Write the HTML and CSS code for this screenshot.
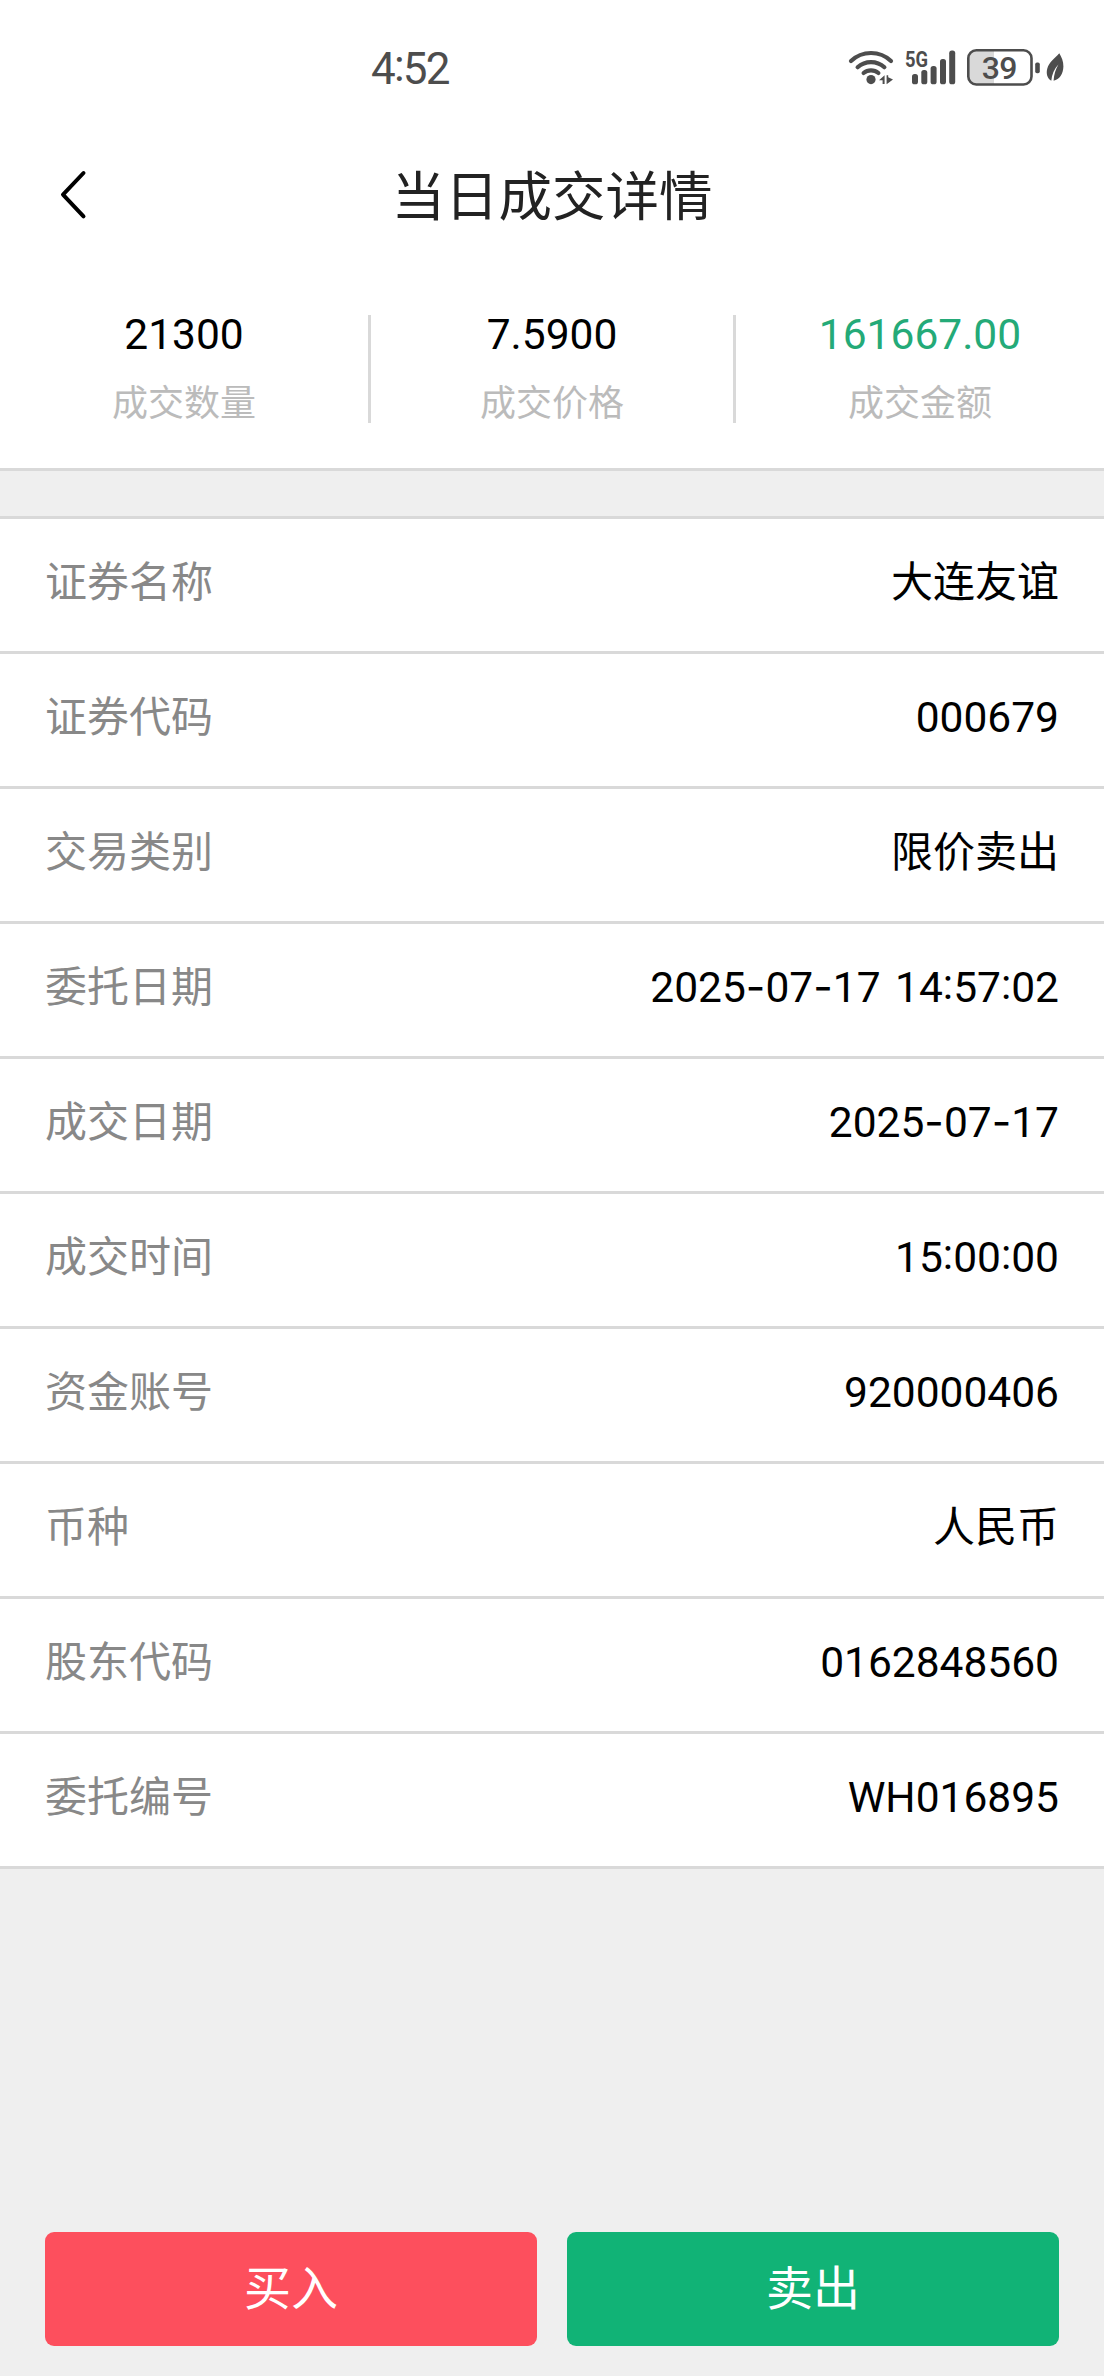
FILE: index.html
```html
<!DOCTYPE html>
<html lang="zh-CN">
<head>
<meta charset="utf-8">
<title>当日成交详情</title>
<link rel="stylesheet" href="styles.css">
</head>
<body>
<div class="screen">
  <div class="status-bar">
    <span class="clock">4<span class="colon">:</span>52</span>
    <svg class="status-icons" width="250" height="65" viewBox="0 0 250 65">
      <g class="line wifi">
        <path d="M21 26 A29 29 0 0 1 61 26"/>
        <path d="M27.6 32.2 A20 20 0 0 1 54.4 32.2"/>
        <path d="M33.6 38 A11.5 11.5 0 0 1 48.4 38"/>
      </g>
      <g class="solid">
        <circle cx="41" cy="44.6" r="4.6"/>
        <path d="M49 45.2 L54.6 40.3 V49 H52.6 V45.2 Z"/>
        <path d="M56.6 40.3 H58.2 V42.2 L63 44.6 L56.6 49.2 Z"/>
        <rect x="82" y="39" width="6" height="10.3" rx="2.6"/>
        <rect x="91.3" y="35" width="6" height="14.3" rx="2.6"/>
        <rect x="100.6" y="31" width="6" height="18.3" rx="2.6"/>
        <rect x="110" y="24" width="6" height="25.3" rx="2.6"/>
        <rect x="119.2" y="15.6" width="6" height="33.7" rx="2.6"/>
        <rect x="205.2" y="27.4" width="4.6" height="10.8" rx="1.8"/>
        <path d="M229.3 18.2 C231.5 22 233.5 26 233.4 31.5 C233.2 39 229.5 44.5 223.6 45.8 C224 39.5 225.6 34.5 228.4 29.6 C224.2 34 221.8 39.5 221.3 45.8 C217 43.5 216 38 217.3 33.5 C219 27 224.5 23.5 229.3 18.2 Z"/>
      </g>
      <text class="net" x="75" y="32.4" textLength="23" lengthAdjust="spacingAndGlyphs">5G</text>
      <path class="charge" d="M164 16 H147 Q139 16 139 24 V41 Q139 49 147 49 H164 Z"/>
      <rect class="line battery" x="138.3" y="15.3" width="63.2" height="34.2" rx="8"/>
      <text class="level" x="169.2" y="43.7">39</text>
    </svg>
  </div>

  <header class="nav">
    <svg class="back" width="28" height="52" viewBox="0 0 28 52"><path d="M23.5 4 L3 25.7 L23.5 47.4"/></svg>
    <h1 class="title">当日成交详情</h1>
  </header>

  <section class="summary">
    <div class="stat"><span class="figure">21300</span><span class="caption">成交数量</span></div>
    <div class="divider"></div>
    <div class="stat middle"><span class="figure">7.5900</span><span class="caption">成交价格</span></div>
    <div class="divider"></div>
    <div class="stat"><span class="figure amount">161667.00</span><span class="caption">成交金额</span></div>
  </section>

  <dl class="details">
    <div class="row"><dt>证券名称</dt><dd class="han">大连友谊</dd></div>
    <div class="row"><dt>证券代码</dt><dd>000679</dd></div>
    <div class="row"><dt>交易类别</dt><dd class="han">限价卖出</dd></div>
    <div class="row"><dt>委托日期</dt><dd>2025<span class="dash">-</span>07<span class="dash">-</span>17 14<span class="colon">:</span>57<span class="colon">:</span>02</dd></div>
    <div class="row"><dt>成交日期</dt><dd>2025<span class="dash">-</span>07<span class="dash">-</span>17</dd></div>
    <div class="row"><dt>成交时间</dt><dd>15<span class="colon">:</span>00<span class="colon">:</span>00</dd></div>
    <div class="row"><dt>资金账号</dt><dd>920000406</dd></div>
    <div class="row"><dt>币种</dt><dd class="han">人民币</dd></div>
    <div class="row"><dt>股东代码</dt><dd>0162848560</dd></div>
    <div class="row"><dt>委托编号</dt><dd>WH016895</dd></div>
  </dl>

  <footer class="actions">
    <button class="btn buy">买入</button>
    <button class="btn sell">卖出</button>
  </footer>
</div>
</body>
</html>
```
FILE: styles.css
```css
* { box-sizing: border-box; }

body {
  margin: 0;
  background: #efefef;
  font-family: Roboto, "Noto Sans CJK SC", sans-serif;
  color: #000;
}

.screen {
  display: flex;
  flex-direction: column;
  width: 1104px;
  height: 2376px;
}

.status-bar {
  display: flex;
  justify-content: space-between;
  align-items: center;
  height: 135px;
  padding: 0 24px 0 371px;
  background: #fff;
}

.clock {
  padding-top: 2px;
  color: #4d4d4d;
  font-size: 44px;
  line-height: 60px;
  letter-spacing: -1.8px;
}

.colon {
  vertical-align: 3px;
  line-height: 1;
}

.dash {
  font-family: Inter, sans-serif;
  line-height: 1;
}

.solid { fill: #4d4d4d; }
.line { fill: none; stroke: #4d4d4d; stroke-linecap: round; }
.wifi { stroke-width: 4.2; }
.battery { stroke-width: 2.6; }
.charge { fill: #d9d9d9; }
.net { fill: #4d4d4d; font-size: 22.5px; font-weight: 700; }
.level { fill: #4d4d4d; font-size: 32px; font-weight: 500; text-anchor: middle; letter-spacing: -0.8px; }

.nav {
  display: grid;
  grid-template-columns: 1fr auto 1fr;
  align-items: center;
  height: 120px;
  padding: 0 60px;
  background: #fff;
}

.back {
  fill: none;
  stroke: #000;
  stroke-width: 4;
  stroke-linecap: round;
  stroke-linejoin: round;
}

.title {
  margin: 0;
  padding-top: 5px;
  color: #222;
  font-size: 53.5px;
  font-weight: 400;
  line-height: 80px;
}

.summary {
  display: flex;
  height: 216px;
  padding-top: 60px;
  border-bottom: 3px solid #d9d9d9;
  background: #fff;
}

.stat {
  display: flex;
  flex: 0 0 368px;
  flex-direction: column;
  align-items: center;
}

.stat.middle { flex-basis: 362px; }

.divider {
  width: 3px;
  height: 108px;
  background: #d9d9d9;
}

.figure {
  font-size: 42.5px;
  line-height: 40px;
}

.figure.amount { color: #24aa78; }

.caption {
  margin-top: 24px;
  color: #bbb;
  font-size: 36px;
  line-height: 50px;
}

.details {
  margin: 45px 0 0;
  border-top: 3px solid #d9d9d9;
}

.row {
  display: flex;
  justify-content: space-between;
  height: 135px;
  padding: 0 45px;
  border-bottom: 3px solid #d9d9d9;
  background: #fff;
  font-size: 42px;
  line-height: 128px;
}

.row dt { color: #888; }
.row dd { margin: 0; font-size: 42.5px; word-spacing: 4px; }
.row .han { font-size: 42px; }

.actions {
  display: flex;
  gap: 30px;
  margin-top: auto;
  padding: 0 45px 30px;
}

.btn {
  flex: 1;
  height: 114px;
  padding: 0 0 10px;
  border: 0;
  border-radius: 9px;
  color: #fff;
  font: 400 47px/1 "Noto Sans CJK SC", sans-serif;
}

.buy { background: #fd4f5d; }
.sell { background: #11b376; }
```
